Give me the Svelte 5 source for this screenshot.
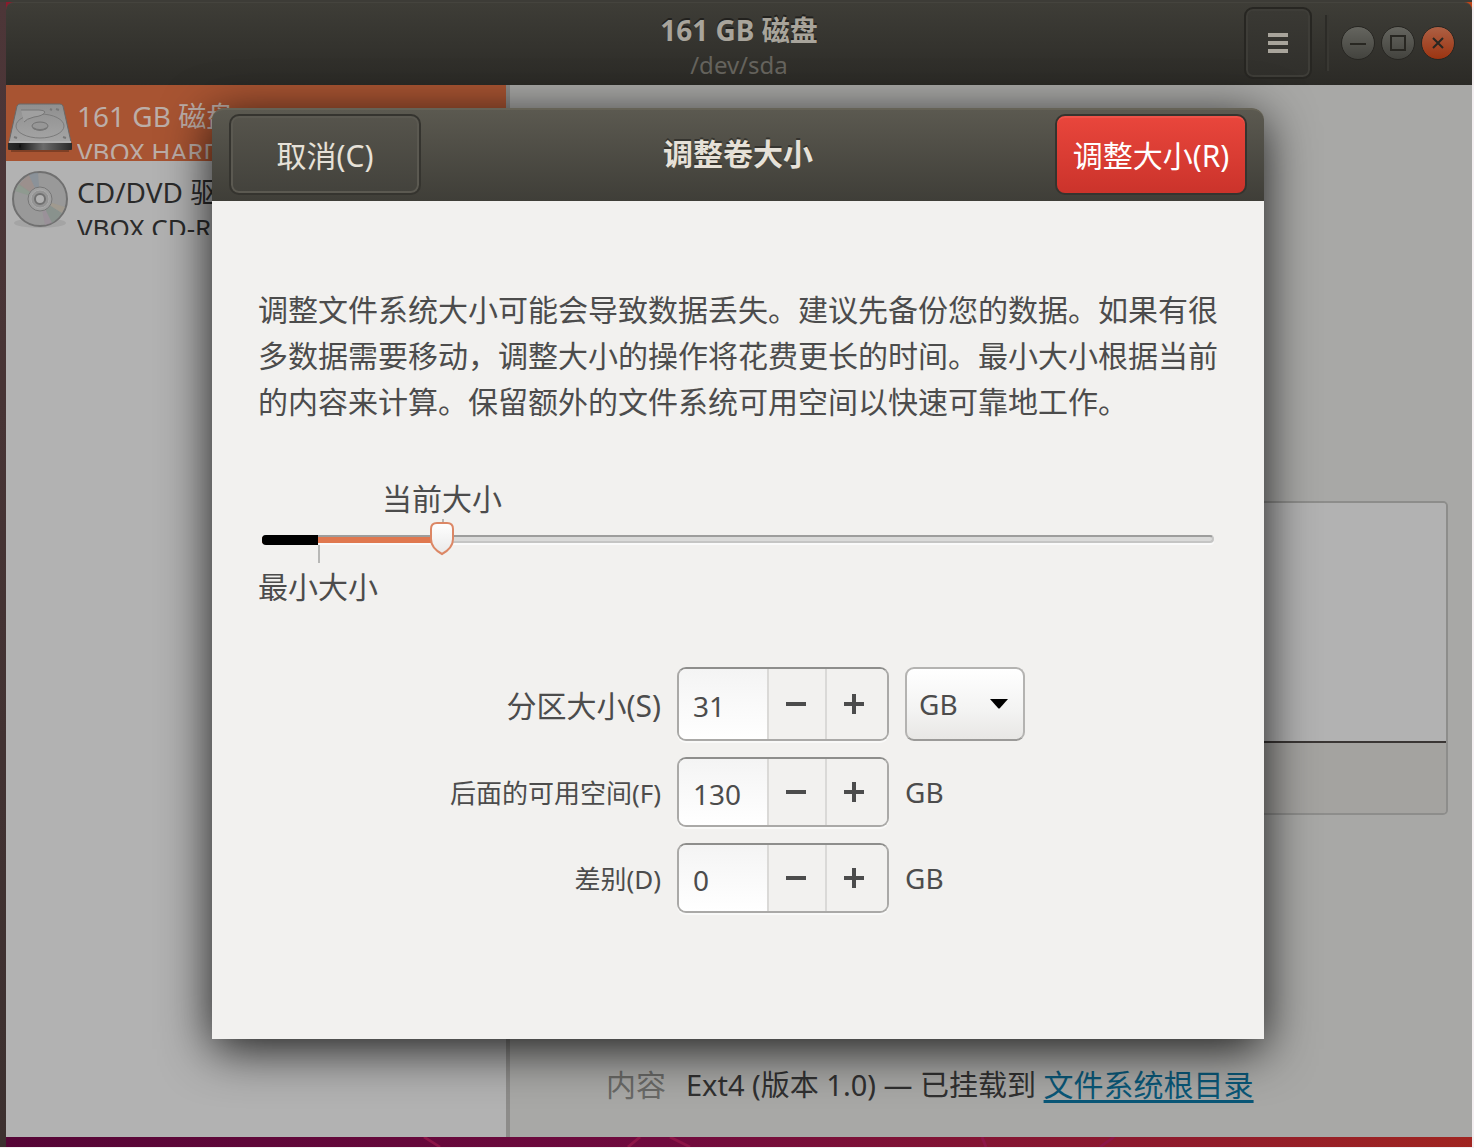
<script lang="ts">
  interface Device {
    icon: 'disk' | 'disc';
    name: string;
    model: string;
  }

  interface SizeField {
    id: string;
    label: string;
    value: number;
    large: boolean;
  }

  const devices: Device[] = [
    { icon: 'disk', name: '161 GB 磁盘', model: 'VBOX HARDDISK' },
    { icon: 'disc', name: 'CD/DVD 驱动器', model: 'VBOX CD-ROM' }
  ];

  const units = ['MB', 'GB', 'TB'];
  const scaleMax = 164;
  const minimum = 9.7;
  const current = 31;

  let selected = $state(0);
  let unit = $state('GB');
  let fields: SizeField[] = $state([
    { id: 'size', label: '分区大小(S)', value: 31, large: true },
    { id: 'following', label: '后面的可用空间(F)', value: 130, large: false },
    { id: 'difference', label: '差别(D)', value: 0, large: false }
  ]);

  const toPercent = (value: number) => (value / scaleMax) * 100;

  let position = $derived(toPercent(fields[0].value));

  function step(index: number, amount: number) {
    fields[index].value += amount;
  }
</script>

<div class="desktop">
  <svg class="wallpaper" viewBox="0 0 1466 11" preserveAspectRatio="none" aria-hidden="true">
    <path d="M418 0l16 11M634 0l-12 11M664 0l20 11M976 0l4 11M1108 0l-14 11" />
  </svg>

  <div class="window">
    <header class="titlebar">
      <div class="titles">
        <h1>161 GB 磁盘</h1>
        <p>/dev/sda</p>
      </div>
      <div class="controls">
        <button class="menu" aria-label="菜单">
          <svg width="20" height="20" viewBox="0 0 20 20"><path d="M0 2h20M0 10h20M0 18h20" /></svg>
        </button>
        <span class="divider"></span>
        <button class="round" aria-label="最小化">
          <svg width="16" height="16" viewBox="0 0 16 16"><path d="M0 9h16" /></svg>
        </button>
        <button class="round" aria-label="最大化">
          <svg width="16" height="16" viewBox="0 0 16 16"><path d="M1 1h14v14H1z" /></svg>
        </button>
        <button class="round close" aria-label="关闭">
          <svg width="16" height="16" viewBox="0 0 16 16"><path d="M3 3l10 10M13 3L3 13" /></svg>
        </button>
      </div>
    </header>

    <div class="content">
      <aside class="sidebar">
        {#each devices as device, i}
          <button class="device" class:selected={selected === i} onclick={() => (selected = i)}>
            {#if device.icon === 'disk'}
              <svg width="66" height="60" viewBox="0 -10 66 60">
                <defs>
                  <linearGradient id="disk-top" x1="0" y1="0" x2="0" y2="1">
                    <stop offset="0" stop-color="#8f8f8f" />
                    <stop offset="1" stop-color="#a5a5a5" />
                  </linearGradient>
                  <linearGradient id="disk-front" x1="0" y1="0" x2="1" y2="0">
                    <stop offset="0" stop-color="#2c2c2c" />
                    <stop offset=".2" stop-color="#1c1c1c" />
                    <stop offset=".55" stop-color="#6b6b6b" />
                    <stop offset="1" stop-color="#292929" />
                  </linearGradient>
                </defs>
                <path d="M4 47h58v2H4z" fill="#000" opacity=".25" />
                <path d="M11 2Q11 1 13 1H53Q55 1 56 3L64 39H2L10 3z" fill="url(#disk-top)" stroke="#696969" />
                <path d="M2 38h62v3H2z" fill="#b0b0b0" />
                <path d="M1 40h64v6q0 1-1 1H2q-1 0-1-1z" fill="url(#disk-front)" />
                <path d="M12 43h2" stroke="#111" stroke-width="3" />
                <ellipse cx="33" cy="23" rx="24" ry="12" fill="none" stroke="#7b7b7b" />
                <path d="M14 7h18q5 0 6 2-2 4-11 5-8 2-10 5" fill="#a0a0a0" stroke="#777" />
                <ellipse cx="33" cy="23" rx="8" ry="4" fill="#979797" stroke="#727272" />
                <path d="M26 25q7 4 14 0M7 34l3 1M56 34l3 1M49 6l3 1M43 6l2 1" fill="none" stroke="#777" stroke-width="2" />
              </svg>
            {:else}
              <svg width="66" height="60" viewBox="0 0 66 60">
                <ellipse cx="33" cy="54" rx="26" ry="5" fill="#000" opacity=".08" />
                <circle cx="33" cy="30" r="27" fill="#999" stroke="#707070" stroke-width="2" />
                <path d="M33 30L12 16Q17 9 22 6z" fill="#9b8d8a" opacity=".8" />
                <path d="M33 30L22 6Q28 3 31 4z" fill="#858f98" opacity=".7" />
                <path d="M33 30L8 22 12 15z" fill="#8a9a8b" opacity=".7" />
                <path d="M33 30L55 44Q50 51 45 54z" fill="#849089" opacity=".8" />
                <path d="M33 30L58 38 55 44z" fill="#a19a8c" opacity=".8" />
                <path d="M33 30L45 54 38 56z" fill="#9a8d98" opacity=".7" />
                <circle cx="33" cy="30" r="12" fill="#a0a0a0" stroke="#777" />
                <circle cx="33" cy="30" r="9" fill="#949494" stroke="#aaa" />
                <circle cx="33" cy="30" r="5" fill="#b2b2b2" stroke="#707070" stroke-width="2" />
              </svg>
            {/if}
            <span class="device-text">
              <span class="device-name">{device.name}</span>
              <span class="device-model">{device.model}</span>
            </span>
          </button>
        {/each}
      </aside>

      <main class="details">
        <div class="volumes">
          <div class="volume"></div>
          <div class="toolbar"></div>
        </div>
        <dl>
          <dt>内容</dt>
          <dd>Ext4 (版本 1.0) — 已挂载到 <a href="#root">文件系统根目录</a></dd>
        </dl>
      </main>
    </div>

    <div class="overlay">
      <div class="dialog" role="dialog" aria-labelledby="dialog-title">
        <header class="dialog-header">
          <button class="cancel">取消(C)</button>
          <h2 id="dialog-title">调整卷大小</h2>
          <button class="resize">调整大小(R)</button>
        </header>

        <div class="dialog-body">
          <p class="warning">
            调整文件系统大小可能会导致数据丢失。建议先备份您的数据。如果有很多数据需要移动，调整大小的操作将花费更长的时间。最小大小根据当前的内容来计算。保留额外的文件系统可用空间以快速可靠地工作。
          </p>

          <div class="scale">
            <label class="current" for="scale" style="margin-left: {toPercent(current)}%">当前大小</label>
            <div class="rail">
              <div class="trough"></div>
              <div class="tick above" style="left: {toPercent(current)}%"></div>
              <div class="fill" style="width: {position}%"></div>
              <div class="blocked" style="width: {toPercent(minimum)}%"></div>
              <div class="tick below" style="left: {toPercent(minimum)}%"></div>
              <svg class="knob" style="left: {position}%" width="28" height="36" viewBox="0 0 28 36">
                <defs>
                  <linearGradient id="knob" x1="0" y1="0" x2="0" y2="1">
                    <stop offset="0" stop-color="#fff" />
                    <stop offset="1" stop-color="#e9e9e9" />
                  </linearGradient>
                </defs>
                <path d="M9 2H19Q25 2 25 8V18Q25 27 14 33Q3 27 3 18V8Q3 2 9 2z" fill="url(#knob)" stroke="#dc8765" stroke-width="2" />
              </svg>
              <input id="scale" type="range" min="0" max={scaleMax} bind:value={fields[0].value} />
            </div>
          </div>
          <p class="minimum">最小大小</p>

          <form class="sizes">
            {#each fields as field, i}
              <label for={field.id} class:large={field.large}>{field.label}</label>
              <div class="spin" class:large={field.large}>
                <input id={field.id} type="number" bind:value={field.value} />
                <button type="button" aria-label="减少" onclick={() => step(i, -1)}>
                  <svg width="20" height="20" viewBox="0 0 20 20"><path d="M0 10h20" /></svg>
                </button>
                <button type="button" aria-label="增加" onclick={() => step(i, 1)}>
                  <svg width="20" height="20" viewBox="0 0 20 20"><path d="M0 10h20M10 0v20" /></svg>
                </button>
              </div>
              {#if i === 0}
                <div class="unit-select">
                  <select aria-label="单位" bind:value={unit}>
                    {#each units as name}
                      <option>{name}</option>
                    {/each}
                  </select>
                  <svg width="20" height="12" viewBox="0 0 20 12"><path d="M1 1h18l-8 9q-1 1-2 0z" /></svg>
                </div>
              {:else}
                <span class="unit">{unit}</span>
              {/if}
            {/each}
          </form>
        </div>
      </div>
    </div>
  </div>
</div>

<style>
  :global(body) {
    margin: 0;
    background: #f3eff1;
    font-family: "Noto Sans", "Noto Sans CJK SC", sans-serif;
    font-size: 30px;
  }
  h1, h2, p, dl, dd {
    margin: 0;
  }
  button, input, select {
    font-family: inherit;
    font-size: inherit;
    margin: 0;
    box-sizing: border-box;
  }
  .desktop {
    position: relative;
    display: flex;
    box-sizing: border-box;
    min-height: calc(100vh - 1px);
    margin: 0 2px 1px 0;
    padding: 2px 0 10px 6px;
    background:
      linear-gradient(#3d3c37, #3d3c37) top / 100% 2px no-repeat,
      linear-gradient(#4d3638, #3c302f) left / 6px 100% no-repeat,
      linear-gradient(90deg, #8c1a2c, #c04416) top / 100% 20px no-repeat,
      linear-gradient(90deg, #550536, #700a3e 45%, #8b182f 75%, #a02521);
  }
  .wallpaper {
    position: absolute;
    left: 6px;
    bottom: 0;
    width: calc(100% - 6px);
    height: 10px;
    fill: none;
    stroke: #8c1547;
    stroke-width: 3;
  }
  .window {
    position: relative;
    flex: 1;
    min-width: 0;
    display: flex;
    flex-direction: column;
  }
  .titlebar {
    display: grid;
    grid-template-columns: 1fr auto 1fr;
    height: 83px;
    box-sizing: border-box;
    border-top: 1px solid #45443e;
    border-radius: 8px 8px 0 0;
    background: linear-gradient(#3e3d37, #2b2a26);
    color: #a8a49b;
  }
  .titles {
    grid-column: 2;
    padding-top: 9px;
    text-align: center;
  }
  .titles h1 {
    font-size: 28px;
    line-height: 36px;
    text-shadow: 0 -2px #22211e;
  }
  .titles p {
    font-size: 24px;
    line-height: 34px;
    color: #66645e;
  }
  .controls {
    display: flex;
    align-items: center;
    justify-content: flex-end;
    gap: 6px;
    padding: 0 17px 2px 0;
  }
  .controls svg {
    fill: none;
    stroke: #282722;
    stroke-width: 2;
  }
  .menu {
    display: grid;
    place-items: center;
    width: 68px;
    height: 72px;
    margin-right: 7px;
    border: 2px solid #272622;
    border-radius: 9px;
    background: linear-gradient(#3a3934, #302f2b);
    box-shadow: inset 0 0 0 2px #3e3d38;
  }
  .controls .menu svg {
    stroke: #a8a49b;
    stroke-width: 4;
  }
  .divider {
    width: 2px;
    height: 56px;
    margin-right: 6px;
    background: #2c2b27;
    border-right: 2px solid #393833;
  }
  .round {
    display: grid;
    place-items: center;
    width: 34px;
    height: 34px;
    padding: 0;
    border: 1px solid #272622;
    border-radius: 50%;
    background: linear-gradient(#65655f, #43433e);
  }
  .close {
    background: linear-gradient(#ad6044, #9c3411);
  }
  .content {
    flex: 1;
    display: flex;
  }
  .sidebar {
    flex: 0 0 500px;
    border-right: 4px solid #8d8c8a;
    background: #b2b2b2;
  }
  .device {
    display: flex;
    align-items: center;
    gap: 4px;
    width: 100%;
    height: 76px;
    padding: 0 1px;
    border: none;
    background: none;
    color: #2a2a2a;
    text-align: left;
    white-space: nowrap;
  }
  .device svg {
    flex: none;
  }
  .device.selected {
    background: #a85432;
    color: #bcaea8;
  }
  .device-text {
    align-self: flex-start;
    height: 74px;
    overflow: hidden;
  }
  .device-name, .device-model {
    display: block;
  }
  .device-name {
    padding-top: 11px;
    font-size: 28px;
    line-height: 40px;
  }
  .device-model {
    font-size: 26px;
    line-height: 32px;
  }
  .details {
    flex: 1;
    display: flex;
    flex-direction: column;
    justify-content: flex-end;
    gap: 248px;
    padding: 0 24px 30px;
    background: #a8a8a6;
    color: #303030;
  }
  .volumes {
    border: 2px solid #8d8d8b;
    border-radius: 5px;
    overflow: hidden;
  }
  .volume {
    height: 238px;
    border-bottom: 2px solid #3a3634;
    background: #b2b2b2;
  }
  .toolbar {
    height: 70px;
    background: #a4a3a0;
  }
  .details dl {
    display: flex;
    gap: 20px;
    padding-left: 72px;
    line-height: 44px;
    white-space: nowrap;
  }
  .details dt {
    color: #696966;
  }
  .details dd {
    font-size: 29px;
  }
  .details a {
    color: #0a5777;
    font-size: 30px;
    text-underline-offset: 4px;
  }
  .overlay {
    position: absolute;
    inset: 0;
    display: flex;
    justify-content: center;
    align-items: flex-start;
    padding: 106px 2px 0 0;
  }
  .dialog {
    width: 1052px;
    max-width: 90%;
    border-radius: 12px 12px 0 0;
    box-shadow: 0 10px 50px rgba(0, 0, 0, 0.85);
    color: #4c4c4c;
  }
  .dialog-header {
    display: grid;
    grid-template-columns: 192px 1fr 192px;
    align-items: center;
    height: 93px;
    box-sizing: border-box;
    padding: 0 17px 2px;
    border-top: 2px solid #656256;
    border-radius: 12px 12px 0 0;
    background: linear-gradient(#5b5950, #3f3e38);
    color: #e6e1d8;
    text-align: center;
  }
  .dialog-header h2 {
    font-size: 30px;
    line-height: 40px;
    padding-bottom: 2px;
    text-shadow: 0 -2px #35342f;
  }
  .dialog-header button {
    height: 81px;
    padding: 0 0 2px;
    border: 2px solid #35342f;
    border-radius: 10px;
    color: inherit;
    background: linear-gradient(#56544c, #43423c);
    box-shadow: inset 0 0 0 2px #5b5951;
  }
  .dialog-header .resize {
    color: #fff;
    background: linear-gradient(#e9463c, #cb332b);
    box-shadow: inset 0 2px #ed5349;
  }
  .dialog-body {
    padding: 86px 46px 126px;
    background: #f2f1ef;
  }
  .warning {
    line-height: 46px;
  }
  .scale {
    margin: 54px 4px 0;
    line-height: 40px;
  }
  .current {
    display: block;
    width: fit-content;
    transform: translateX(-50%);
  }
  .rail {
    position: relative;
    height: 44px;
  }
  .rail > * {
    position: absolute;
  }
  .trough {
    top: 16px;
    width: 100%;
    height: 8px;
    box-sizing: border-box;
    border: 2px solid #c5c5c4;
    border-top-color: #9d9d9c;
    border-radius: 4px;
    background: #dadad9;
    box-shadow: 0 2px #fafafa;
  }
  .fill {
    top: 18px;
    height: 6px;
    background: #e0784f;
  }
  .blocked {
    top: 16px;
    height: 10px;
    border-radius: 4px 0 0 4px;
    background: #000;
  }
  .tick {
    width: 2px;
    background: #b8b8b6;
  }
  .above {
    top: 0;
    height: 8px;
  }
  .below {
    top: 26px;
    height: 18px;
  }
  .knob {
    top: 2px;
    transform: translateX(-50%);
  }
  .rail input {
    left: -12px;
    width: calc(100% + 24px);
    height: 40px;
    opacity: 0;
  }
  .minimum {
    padding-top: 4px;
    line-height: 40px;
  }
  .sizes {
    display: grid;
    grid-template-columns: 210px 212px 120px;
    justify-content: center;
    align-items: center;
    gap: 16px;
    margin-top: 60px;
  }
  .sizes label {
    display: flex;
    justify-content: flex-end;
    font-size: 26px;
    white-space: nowrap;
  }
  .sizes label.large {
    font-size: 30px;
  }
  .spin {
    display: grid;
    grid-template-columns: 88px 58px 1fr;
    height: 70px;
    box-sizing: border-box;
    border: 2px solid #aaa9a7;
    border-top-color: #8e8e8c;
    border-radius: 9px;
    box-shadow: 0 2px #f9f9f8;
    overflow: hidden;
  }
  .spin.large {
    height: 74px;
  }
  .spin input {
    min-width: 0;
    padding: 4px 0 0 14px;
    border: none;
    background: linear-gradient(#f4f4f4, #fff);
    color: inherit;
    font-size: 28px;
    appearance: textfield;
  }
  .spin input::-webkit-inner-spin-button {
    appearance: none;
    margin: 0;
  }
  .spin button {
    padding: 0 2px 0 0;
    border: none;
    border-left: 2px solid #dad9d7;
    background: #f2f1ef;
    line-height: 0;
  }
  .spin button:last-child {
    padding-right: 6px;
  }
  .spin svg {
    fill: none;
    stroke: #4c4c4c;
    stroke-width: 4;
  }
  .unit-select {
    display: grid;
    align-items: center;
  }
  .unit-select > * {
    grid-area: 1 / 1;
  }
  .unit-select select {
    width: 100%;
    height: 74px;
    padding: 0 12px;
    border: 2px solid #b4b3b1;
    border-bottom-color: #9b9a98;
    border-radius: 9px;
    appearance: none;
    background: linear-gradient(#fff, #f3f3f2 60%, #e8e7e5);
    color: inherit;
    font-size: 28px;
  }
  .unit-select svg {
    justify-self: end;
    margin-right: 16px;
    pointer-events: none;
  }
  .unit {
    font-size: 28px;
  }
</style>
